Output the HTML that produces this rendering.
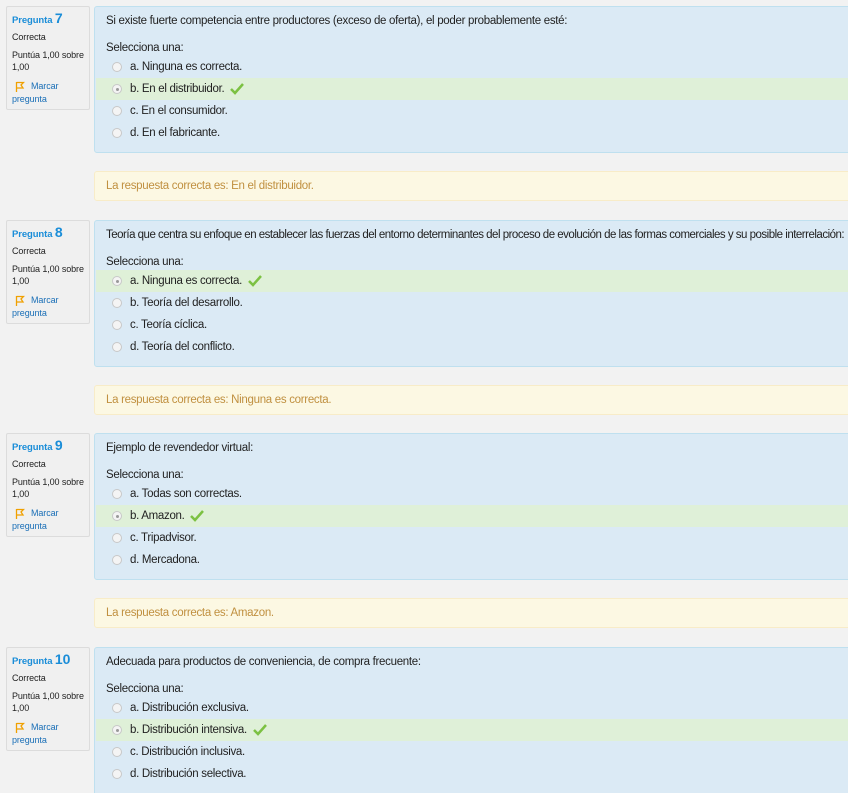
<!DOCTYPE html>
<html style="overflow:hidden;height:793px"><head><meta charset="utf-8"><style>
body{margin:0;width:848px;height:793px;background:#f2f2f2;font-family:"Liberation Sans",sans-serif;overflow:hidden;position:relative;color:#333}
.q{position:absolute;left:0;width:848px;height:214px;overflow:hidden}
.info{position:absolute;left:6px;top:0;width:82px;height:102px;background:#f0f0f0;border:1px solid #dcdcdc;border-radius:2px;font-size:9px;letter-spacing:-0.1px;color:#222}
.info div{position:absolute;left:5px;white-space:nowrap}
.t{top:3px;color:#1a8dd8;font-weight:bold;font-size:9.5px}
.t b{font-size:14px}
.mk{color:#1a6fb7}
.content{position:absolute;left:94px;top:0;width:760px;height:145px;background:#dbeaf5;border:1px solid #bfe0ef;border-radius:3px;font-size:11.5px;letter-spacing:-0.3px;color:#222}
.content .l{position:absolute;left:11px;white-space:nowrap}
.opt{position:absolute;left:1px;width:760px;height:22px}
.opt.ok{background:#dff0d8}
.opt .r{position:absolute;left:16px;top:6px;width:8px;height:8px;border-radius:50%;border:1px solid #c8c8c8;background:#f4f4f4}
.opt.ok .r::after{content:"";position:absolute;left:2.5px;top:2.5px;width:3px;height:3px;border-radius:50%;background:#999}
.opt span{position:absolute;left:34px;top:5px;white-space:nowrap}
.fb{position:absolute;left:94px;top:165px;width:760px;height:28px;background:#fcf8e3;border:1px solid #f8ecc8;border-radius:3px;font-size:11.5px;letter-spacing:-0.3px;color:#c09040}
.fb span{position:absolute;left:11px;top:8px;white-space:nowrap}
svg{vertical-align:middle;margin-left:3px}
.fl{display:inline-block;vertical-align:middle;margin-right:6px}
</style></head><body>

<div class="q" style="top:6px">
 <div class="info"><div class="t">Pregunta <b>7</b></div><div style="top:25px">Correcta</div><div style="top:43px">Puntúa 1,00 sobre</div><div style="top:55px">1,00</div><div class="mk" style="top:74px"><svg class="fl" width="10" height="11" viewBox="0 0 10 11"><path d="M1.5 1v10M1.5 1.5h7l-2.5 2.5 2 3h-6.5" stroke="#f0a000" stroke-width="1.3" fill="none"/></svg>Marcar</div><div class="mk" style="top:87px">pregunta</div></div>
 <div class="content"><div class="l" style="top:8px">Si existe fuerte competencia entre productores (exceso de oferta), el poder probablemente esté:</div>
 <div class="l" style="top:35px">Selecciona una:</div>
 <div class="opt" style="top:49px"><i class="r"></i><span>a. Ninguna es correcta.</span></div>
 <div class="opt ok" style="top:71px"><i class="r"></i><span>b. En el distribuidor. <svg width="14" height="12" viewBox="0 0 14 12"><path d="M1 6l4 4 8-9" stroke="#7cc142" stroke-width="2.5" fill="none"/></svg></span></div>
 <div class="opt" style="top:93px"><i class="r"></i><span>c. En el consumidor.</span></div>
 <div class="opt" style="top:115px"><i class="r"></i><span>d. En el fabricante.</span></div></div>
 <div class="fb"><span>La respuesta correcta es: En el distribuidor.</span></div>
</div>

<div class="q" style="top:220px">
 <div class="info"><div class="t">Pregunta <b>8</b></div><div style="top:25px">Correcta</div><div style="top:43px">Puntúa 1,00 sobre</div><div style="top:55px">1,00</div><div class="mk" style="top:74px"><svg class="fl" width="10" height="11" viewBox="0 0 10 11"><path d="M1.5 1v10M1.5 1.5h7l-2.5 2.5 2 3h-6.5" stroke="#f0a000" stroke-width="1.3" fill="none"/></svg>Marcar</div><div class="mk" style="top:87px">pregunta</div></div>
 <div class="content"><div class="l" style="top:8px;letter-spacing:-0.5px">Teoría que centra su enfoque en establecer las fuerzas del entorno determinantes del proceso de evolución de las formas comerciales y su posible interrelación:</div>
 <div class="l" style="top:35px">Selecciona una:</div>
 <div class="opt ok" style="top:49px"><i class="r"></i><span>a. Ninguna es correcta. <svg width="14" height="12" viewBox="0 0 14 12"><path d="M1 6l4 4 8-9" stroke="#7cc142" stroke-width="2.5" fill="none"/></svg></span></div>
 <div class="opt" style="top:71px"><i class="r"></i><span>b. Teoría del desarrollo.</span></div>
 <div class="opt" style="top:93px"><i class="r"></i><span>c. Teoría cíclica.</span></div>
 <div class="opt" style="top:115px"><i class="r"></i><span>d. Teoría del conflicto.</span></div></div>
 <div class="fb"><span>La respuesta correcta es: Ninguna es correcta.</span></div>
</div>

<div class="q" style="top:433px">
 <div class="info"><div class="t">Pregunta <b>9</b></div><div style="top:25px">Correcta</div><div style="top:43px">Puntúa 1,00 sobre</div><div style="top:55px">1,00</div><div class="mk" style="top:74px"><svg class="fl" width="10" height="11" viewBox="0 0 10 11"><path d="M1.5 1v10M1.5 1.5h7l-2.5 2.5 2 3h-6.5" stroke="#f0a000" stroke-width="1.3" fill="none"/></svg>Marcar</div><div class="mk" style="top:87px">pregunta</div></div>
 <div class="content"><div class="l" style="top:8px">Ejemplo de revendedor virtual:</div>
 <div class="l" style="top:35px">Selecciona una:</div>
 <div class="opt" style="top:49px"><i class="r"></i><span>a. Todas son correctas.</span></div>
 <div class="opt ok" style="top:71px"><i class="r"></i><span>b. Amazon. <svg width="14" height="12" viewBox="0 0 14 12"><path d="M1 6l4 4 8-9" stroke="#7cc142" stroke-width="2.5" fill="none"/></svg></span></div>
 <div class="opt" style="top:93px"><i class="r"></i><span>c. Tripadvisor.</span></div>
 <div class="opt" style="top:115px"><i class="r"></i><span>d. Mercadona.</span></div></div>
 <div class="fb"><span>La respuesta correcta es: Amazon.</span></div>
</div>

<div class="q" style="top:647px;height:146px">
 <div class="info"><div class="t">Pregunta <b>10</b></div><div style="top:25px">Correcta</div><div style="top:43px">Puntúa 1,00 sobre</div><div style="top:55px">1,00</div><div class="mk" style="top:74px"><svg class="fl" width="10" height="11" viewBox="0 0 10 11"><path d="M1.5 1v10M1.5 1.5h7l-2.5 2.5 2 3h-6.5" stroke="#f0a000" stroke-width="1.3" fill="none"/></svg>Marcar</div><div class="mk" style="top:87px">pregunta</div></div>
 <div class="content" style="height:160px"><div class="l" style="top:8px">Adecuada para productos de conveniencia, de compra frecuente:</div>
 <div class="l" style="top:35px">Selecciona una:</div>
 <div class="opt" style="top:49px"><i class="r"></i><span>a. Distribución exclusiva.</span></div>
 <div class="opt ok" style="top:71px"><i class="r"></i><span>b. Distribución intensiva. <svg width="14" height="12" viewBox="0 0 14 12"><path d="M1 6l4 4 8-9" stroke="#7cc142" stroke-width="2.5" fill="none"/></svg></span></div>
 <div class="opt" style="top:93px"><i class="r"></i><span>c. Distribución inclusiva.</span></div>
 <div class="opt" style="top:115px"><i class="r"></i><span>d. Distribución selectiva.</span></div></div>
</div>

</body></html>
